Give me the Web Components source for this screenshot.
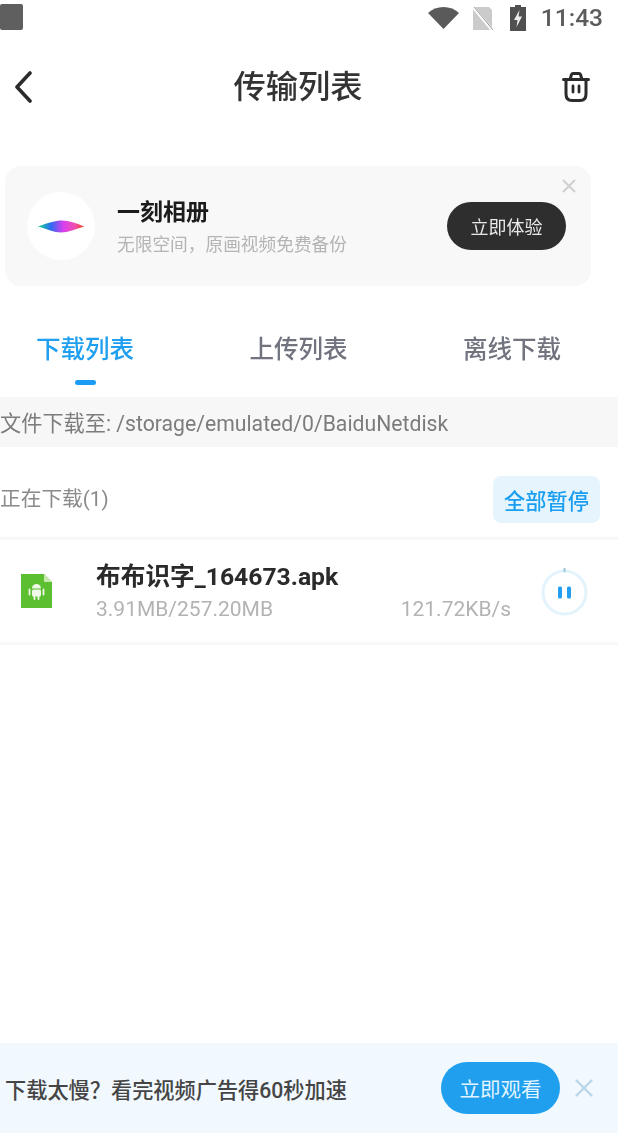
<!DOCTYPE html>
<html lang="zh">
<head>
<meta charset="utf-8">
<title>传输列表</title>
<style>
  html, body { margin: 0; background: #fff; }
  body { font-family: Roboto, "Noto Sans CJK SC", sans-serif; }
  app-shell { width: 618px; height: 1140px; }
</style>
</head>
<body>
<app-shell>
  <status-bar>11:43</status-bar>
  <nav-bar>传输列表</nav-bar>
  <promo-card>
    <span slot="title">一刻相册</span>
    <span slot="sub">无限空间，原画视频免费备份</span>
    <span slot="action">立即体验</span>
  </promo-card>
  <tab-bar>
    <tab-item active>下载列表</tab-item>
    <tab-item>上传列表</tab-item>
    <tab-item>离线下载</tab-item>
  </tab-bar>
  <path-bar>文件下载至: /storage/emulated/0/BaiduNetdisk</path-bar>
  <section-head>
    正在下载(1)
    <span slot="action">全部暂停</span>
  </section-head>
  <download-item>
    <span slot="name">布布识字_164673.apk</span>
    <span slot="size">3.91MB/257.20MB</span>
    <span slot="speed">121.72KB/s</span>
  </download-item>
  <speed-banner>
    下载太慢？看完视频广告得60秒加速
    <span slot="action">立即观看</span>
  </speed-banner>
</app-shell>

<script>
  function define(name, html) {
    customElements.define(name, class extends HTMLElement {
      constructor() {
        super();
        this.attachShadow({ mode: 'open' });
        this.shadowRoot.innerHTML = html;
      }
    });
  }

  define('app-shell', `
    <style>
      :host { display: flex; flex-direction: column; overflow: hidden; filter: blur(0.6px); }
    </style>
    <slot></slot>
  `);

  define('status-bar', `
    <style>
      :host { display: flex; align-items: center; height: 36px; color: #5c5c5c; font-size: 24.500px; font-weight: 500; }
      .square { width: 23px; height: 26px; margin-top: -2px; background: #5f5f5f; border-radius: 2px; }
      .wifi { margin-left: auto; }
      .sim { margin-left: 13px; }
      .battery { margin-left: 17px; }
      .time { margin-left: 15px; margin-right: 15px; line-height: 36px; }
    </style>
    <div class="square"></div>
    <svg class="wifi" width="31" height="22" viewBox="0 0 31 22"><path d="M0 6C4 2 9.500 0 15.500 0S27 2 31 6L15.500 22Z" fill="#5a5a5a"/></svg>
    <svg class="sim" width="21" height="25" viewBox="0 0 21 25">
      <path d="M1 1H17L20 4V24H1Z" fill="#cbcbcb"/>
      <path d="M0 0L21 25" stroke="#fff" stroke-width="3"/>
      <path d="M2 1L21 24" stroke="#9a9a9a" stroke-width="1"/>
    </svg>
    <svg class="battery" width="16" height="26" viewBox="0 0 16 26">
      <path d="M5 0H11V2H16V26H0V2H5Z" fill="#505050"/>
      <path d="M9.500 5L4 15H7.500L6.500 22L12 11.500H8.500Z" fill="#eee"/>
    </svg>
    <span class="time"><slot></slot></span>
  `);

  define('nav-bar', `
    <style>
      :host { display: flex; align-items: center; justify-content: space-between; height: 102px; padding: 0 28px 0 14px; color: #333; }
      .title { font-size: 32.300px; font-weight: 500; line-height: 46px; margin-left: 2px; }
      svg { display: block; }
    </style>
    <svg width="18" height="32" viewBox="0 0 18 32"><path d="M16 2L3 16L16 30" fill="none" stroke="#2b2b2b" stroke-width="3.600" stroke-linecap="round" stroke-linejoin="round"/></svg>
    <span class="title"><slot></slot></span>
    <svg width="28" height="30" viewBox="0 0 28 30" fill="none" stroke="#2b2b2b" stroke-width="3" stroke-linecap="round" stroke-linejoin="round">
      <path d="M1.500 7.500H26.500"/>
      <path d="M8 7.500L9.500 2.500C9.800 1.800 10.200 1.500 11 1.500H17C17.800 1.500 18.200 1.800 18.500 2.500L20 7.500"/>
      <path d="M4 7.500V22C4 26 6 28.500 10 28.500H18C22 28.500 24 26 24 22V7.500"/>
      <path d="M11 14V20M17 14V20" stroke-width="2.800"/>
    </svg>
  `);

  define('promo-card', `
    <style>
      :host { display: flex; align-items: center; position: relative; box-sizing: border-box; width: 586px; height: 120px; margin: 28px 0 0 5px; padding: 0 25px 0 22px; background: #f8f8f8; border-radius: 16px; }
      .logo { display: flex; align-items: center; justify-content: center; width: 68px; height: 68px; border-radius: 50%; background: #fff; flex: none; }
      .text { display: flex; flex-direction: column; flex: 1; margin-left: 22px; padding-top: 2px; }
      .title { font-size: 23px; font-weight: 700; line-height: 32px; color: #1c1c1c; }
      .sub { font-size: 17.700px; line-height: 26px; margin-top: 3px; color: #b4b4b4; }
      .btn { display: flex; align-items: center; justify-content: center; width: 119px; height: 48px; border-radius: 24px; background: #2e2e2e; color: #e8e8e8; font-size: 18px; }
      .close { position: absolute; top: 13px; right: 15px; }
    </style>
    <div class="logo">
      <svg width="46" height="13" viewBox="0 0 46 13">
        <defs>
          <linearGradient id="g" x1="0" y1="0" x2="1" y2="0">
            <stop offset="0" stop-color="#14d890"/>
            <stop offset=".28" stop-color="#2a6cf0"/>
            <stop offset=".55" stop-color="#d83ff0"/>
            <stop offset=".8" stop-color="#f050b0"/>
            <stop offset="1" stop-color="#f0401c"/>
          </linearGradient>
        </defs>
        <path d="M0 6.500C10 3 17 .5 24 .5S38 3 46 6.500C38 9 30 12.500 23 12.500S9 9 0 6.500Z" fill="url(#g)"/>
      </svg>
    </div>
    <div class="text">
      <span class="title"><slot name="title"></slot></span>
      <span class="sub"><slot name="sub"></slot></span>
    </div>
    <div class="btn"><slot name="action"></slot></div>
    <svg class="close" width="14" height="14" viewBox="0 0 14 14"><path d="M1 1L13 13M13 1L1 13" stroke="#cfcfcf" stroke-width="2"/></svg>
  `);

  define('tab-bar', `
    <style>
      :host { display: flex; justify-content: space-between; align-items: flex-start; box-sizing: border-box; height: 111px; padding: 47px 57px 0 36px; }
    </style>
    <slot></slot>
  `);

  define('tab-item', `
    <style>
      :host { display: flex; flex-direction: column; align-items: center; font-size: 24.500px; font-weight: 500; line-height: 34px; color: #71737f; white-space: nowrap; }
      :host([active]) { color: #1f9ff0; }
      .bar { display: none; width: 21px; height: 5px; margin-top: 13px; border-radius: 3px; background: #1a9cf5; }
      :host([active]) .bar { display: block; }
    </style>
    <slot></slot>
    <div class="bar"></div>
  `);

  define('path-bar', `
    <style>
      :host { display: flex; align-items: center; box-sizing: border-box; height: 50px; padding-bottom: 2px; background: #f7f7f7; color: #7c7c7c; font-size: 21.200px; white-space: nowrap; }
    </style>
    <slot></slot>
  `);

  define('section-head', `
    <style>
      :host { display: flex; align-items: center; justify-content: space-between; box-sizing: border-box; height: 90px; padding: 10px 18px 0 0; color: #8a8a8a; font-size: 20.700px; }
      .btn { display: flex; align-items: center; justify-content: center; width: 107px; height: 47px; margin-top: 5px; padding-bottom: 1px; box-sizing: border-box; border-radius: 8px; background: #e6f5fd; color: #1a9ff0; font-size: 21.200px; font-weight: 500; }
    </style>
    <span><slot></slot></span>
    <div class="btn"><slot name="action"></slot></div>
  `);

  define('download-item', `
    <style>
      :host { display: flex; align-items: center; height: 102px; border-top: 3px solid #f8f8f8; border-bottom: 3px solid #f8f8f8; padding: 0 30px 0 21px; }
      .file { flex: none; }
      .info { flex: 1; margin-left: 44px; margin-right: 30px; padding-top: 1px; }
      .name { font-size: 24.700px; font-weight: 700; line-height: 32px; color: #2a2a2a; }
      .meta { display: flex; justify-content: space-between; margin-top: 2px; font-size: 21px; line-height: 28px; color: #b3b3b3; }
      .ring { flex: none; }
    </style>
    <svg class="file" width="31" height="34" viewBox="0 0 31 34">
      <path d="M0 0H23L31 8V34H0Z" fill="#5cbf2f"/>
      <path d="M23 0L31 8H23Z" fill="#c4e8b0"/>
      <path d="M11 14.500A4.500 4.500 0 0 1 20 14.500Z" fill="#eef9e8"/>
      <rect x="11" y="15.500" width="9" height="7" rx="1.500" fill="#eef9e8"/>
      <path d="M8.500 15.500V20.500M22.500 15.500V20.500M13.500 22V25M17.500 22V25" stroke="#eef9e8" stroke-width="1.800" stroke-linecap="round"/>
    </svg>
    <div class="info">
      <div class="name"><slot name="name"></slot></div>
      <div class="meta">
        <span><slot name="size"></slot></span>
        <span><slot name="speed"></slot></span>
      </div>
    </div>
    <svg class="ring" width="47" height="50" viewBox="0 0 47 50">
      <circle cx="23.500" cy="26.500" r="21.500" fill="none" stroke="#e2f3fc" stroke-width="3"/>
      <rect x="22.500" y="2" width="2" height="4" fill="#9cc4da"/>
      <rect x="17" y="20.500" width="4" height="12" rx="1.500" fill="#229ff0"/>
      <rect x="26" y="20.500" width="4" height="12" rx="1.500" fill="#229ff0"/>
    </svg>
  `);

  define('speed-banner', `
    <style>
      :host { display: flex; align-items: center; box-sizing: border-box; height: 90px; margin-top: auto; margin-bottom: 7px; padding: 0 24px 0 5px; background: #f1f8fe; color: #454545; font-size: 21.200px; font-weight: 500; white-space: nowrap; }
      .label { flex: 1; }
      .btn { display: flex; align-items: center; justify-content: center; width: 119px; height: 52px; border-radius: 26px; background: #1f9fee; color: #e2f4ff; font-size: 20.500px; font-weight: 400; }
      svg { margin-left: 14px; }
    </style>
    <span class="label"><slot></slot></span>
    <div class="btn"><slot name="action"></slot></div>
    <svg width="20" height="20" viewBox="0 0 20 20"><path d="M2 2L18 18M18 2L2 18" stroke="#b8d6e8" stroke-width="2.400"/></svg>
  `);
</script>
</body>
</html>
